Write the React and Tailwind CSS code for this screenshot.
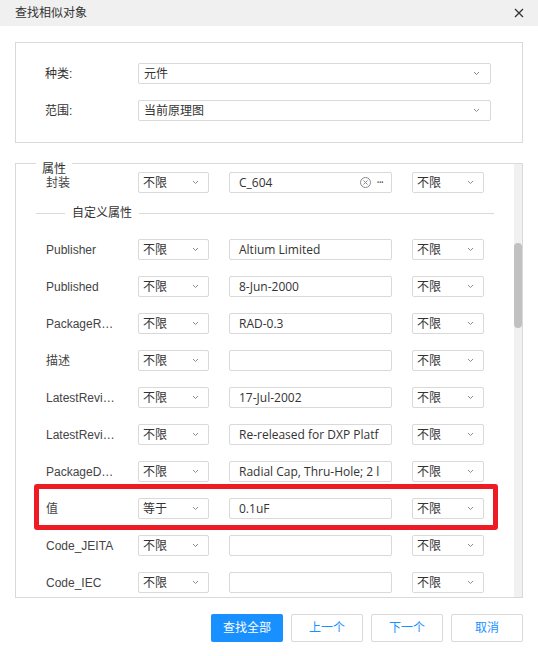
import React from "react";

const rows = [
  { label: "Publisher", op: "不限", value: "Altium Limited" },
  { label: "Published", op: "不限", value: "8-Jun-2000" },
  { label: "PackageR…", op: "不限", value: "RAD-0.3" },
  { label: "描述", op: "不限", value: "" },
  { label: "LatestRevi…", op: "不限", value: "17-Jul-2002" },
  { label: "LatestRevi…", op: "不限", value: "Re-released for DXP Platf" },
  { label: "PackageD…", op: "不限", value: "Radial Cap, Thru-Hole; 2 l" },
  { label: "值", op: "等于", value: "0.1uF" },
  { label: "Code_JEITA", op: "不限", value: "" },
  { label: "Code_IEC", op: "不限", value: "" },
];

function Chevron() {
  return (
    <svg width="7" height="5" viewBox="0 0 7 5" className="shrink-0">
      <path d="M1 1l2.5 2.5L6 1" fill="none" stroke="#8c8c8c" strokeWidth="1" />
    </svg>
  );
}

function Select({ value, className }) {
  return (
    <div
      className={`flex h-[21px] items-center justify-between rounded-[2px] border border-[#d9d9d9] bg-white pl-[4px] pr-[9px] ${className}`}
    >
      <span className="leading-none">{value}</span>
      <Chevron />
    </div>
  );
}

function TextBox({ children }) {
  return (
    <div className="ml-[20px] flex h-[21px] w-[163px] items-center overflow-hidden rounded-[2px] border border-[#d9d9d9] bg-white pl-[9px] pr-[6px] font-['Open_Sans',sans-serif] whitespace-nowrap">
      {children}
    </div>
  );
}

function Row({ label, op, children }) {
  return (
    <div className="flex items-center pl-[30px]">
      <span className="w-[92px] text-[#444]">{label}</span>
      <Select value={op} className="w-[71px]" />
      {children}
      <Select value="不限" className="ml-[20px] w-[72px]" />
    </div>
  );
}

export default function App() {
  return (
    <div className="relative h-[656px] w-[538px] bg-white text-[12px] text-[#333] font-['Liberation_Sans','Noto_Sans_CJK_SC',sans-serif]">
      {/* header */}
      <div className="flex h-[26px] items-center justify-between bg-[#f0f0f0] pl-[15px] pr-[14px]">
        <span>查找相似对象</span>
        <svg width="10" height="10" viewBox="0 0 10 10">
          <path d="M1 1l8 8M9 1l-8 8" stroke="#333" strokeWidth="1.3" />
        </svg>
      </div>

      {/* type / scope */}
      <div className="mx-[15px] mt-[16px] flex h-[101px] flex-col gap-[16px] border border-[#d9d9d9] pl-[29px] pt-[20px]">
        <div className="flex items-center">
          <span className="w-[93px]">种类:</span>
          <Select value="元件" className="w-[353px] pl-[5px] pr-[10px]" />
        </div>
        <div className="flex items-center">
          <span className="w-[93px]">范围:</span>
          <Select value="当前原理图" className="w-[353px] pl-[5px] pr-[10px]" />
        </div>
      </div>

      {/* properties */}
      <div className="relative mx-[15px] mt-[20px] flex h-[435px] border border-[#d9d9d9]">
        <span className="absolute left-[20px] top-[-1px] bg-white px-[6px] leading-[12px]">属性</span>
        <div className="flex-1 overflow-hidden pt-[8px]">
          <Row label="封装" op="不限">
            <TextBox>
              <span className="flex-1">C_604</span>
              <svg width="11" height="11" viewBox="0 0 11 11" className="mr-[6px]">
                <circle cx="5.5" cy="5.5" r="5" fill="none" stroke="#888" />
                <path d="M3.5 3.5l4 4M7.5 3.5l-4 4" stroke="#888" />
              </svg>
              <span className="mr-[2px] leading-none tracking-[-1px] text-[#555]">···</span>
            </TextBox>
          </Row>

          <div className="mt-[14px] flex items-center px-[20px] leading-[12px]">
            <div className="h-px w-[29px] bg-[#d9d9d9]" />
            <span className="px-[7px]">自定义属性</span>
            <div className="h-px flex-1 bg-[#d9d9d9]" />
          </div>

          <div className="mt-[20px] flex flex-col gap-[16px]">
            {rows.map((r, i) => (
              <Row key={i} label={r.label} op={r.op}>
                <TextBox>{r.value}</TextBox>
              </Row>
            ))}
          </div>
        </div>
        <div className="w-[8px] bg-[#f1f1f1] pt-[79px]">
          <div className="h-[85px] rounded-full bg-[#c1c1c1]" />
        </div>
      </div>

      {/* buttons */}
      <div className="mt-[16px] flex justify-end gap-[8px] pr-[15px]">
        <button className="h-[28px] w-[72px] rounded-[2px] bg-[#1890ff] text-white">查找全部</button>
        <button className="h-[28px] w-[72px] rounded-[2px] border border-[#d9d9d9] bg-white text-[#1890ff]">上一个</button>
        <button className="h-[28px] w-[72px] rounded-[2px] border border-[#d9d9d9] bg-white text-[#1890ff]">下一个</button>
        <button className="h-[28px] w-[72px] rounded-[2px] border border-[#d9d9d9] bg-white text-[#1890ff]">取消</button>
      </div>

      {/* highlight annotation */}
      <div className="pointer-events-none absolute left-[34px] top-[484px] h-[46px] w-[464px] rounded-[3px] border-[5px] border-[#ed1c24]" />
    </div>
  );
}
